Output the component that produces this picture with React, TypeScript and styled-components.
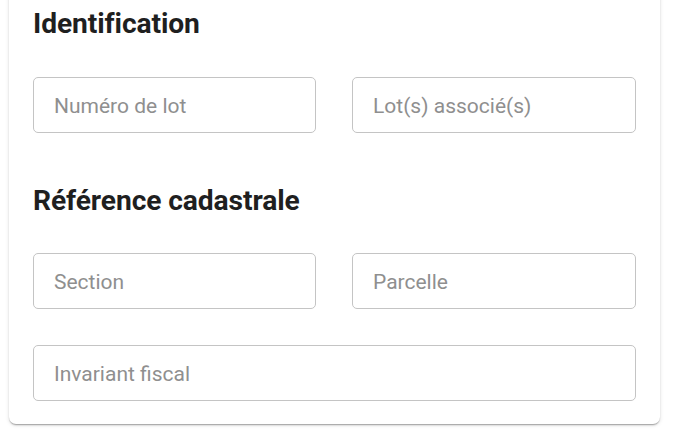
import styled, { createGlobalStyle } from 'styled-components'

const GlobalStyle = createGlobalStyle`
  html, body {
    margin: 0;
    padding: 0;
    background-color: #ffffff;
    font-family: Roboto, "Liberation Sans", Arial, sans-serif;
  }
`

const Page = styled.div`
  width: 678px;
  height: 444px;
  overflow: hidden;
`

const Card = styled.div`
  width: 651px;
  box-sizing: border-box;
  margin: -20px 0 0 9px;
  padding: 27px 24px 23px;
  background-color: #ffffff;
  border-radius: 7px;
  box-shadow: 0px 2px 2px -1px rgba(0, 0, 0, 0.22), 0px 1px 1px 0px rgba(0, 0, 0, 0.14),
    0px 1px 4px 0px rgba(0, 0, 0, 0.12);
`

const Section = styled.section`
  display: flex;
  flex-direction: column;
  gap: 36px;

  & + & {
    margin-top: 51px;
  }
`

const Title = styled.h2`
  margin: 0;
  font-size: 28.2px;
  line-height: 33.6px;
  font-weight: 700;
  color: #1f1f1f;
  letter-spacing: -0.1px;
`

const Fields = styled.div`
  display: grid;
  grid-template-columns: 283px 284px;
  column-gap: 36px;
  row-gap: 36px;
`

const Field = styled.input<{ $wide?: boolean }>`
  grid-column: ${(p) => (p.$wide ? '1 / -1' : 'auto')};
  height: 56px;
  box-sizing: border-box;
  width: 100%;
  padding: 2px 20px 0;
  border: 1px solid #c4c4c4;
  border-radius: 5px;
  background-color: #ffffff;
  font-family: Roboto, "Liberation Sans", Arial, sans-serif;
  font-size: 21px;
  color: #222222;
  outline: none;

  &::placeholder {
    color: #8f8f8f;
  }
`

export default function App() {
  return (
    <Page>
      <GlobalStyle />
      <Card>
        <Section>
          <Title>Identification</Title>
          <Fields>
            <Field placeholder="Numéro de lot" />
            <Field placeholder="Lot(s) associé(s)" />
          </Fields>
        </Section>
        <Section>
          <Title>Référence cadastrale</Title>
          <Fields>
            <Field placeholder="Section" />
            <Field placeholder="Parcelle" />
            <Field $wide placeholder="Invariant fiscal" />
          </Fields>
        </Section>
      </Card>
    </Page>
  )
}
